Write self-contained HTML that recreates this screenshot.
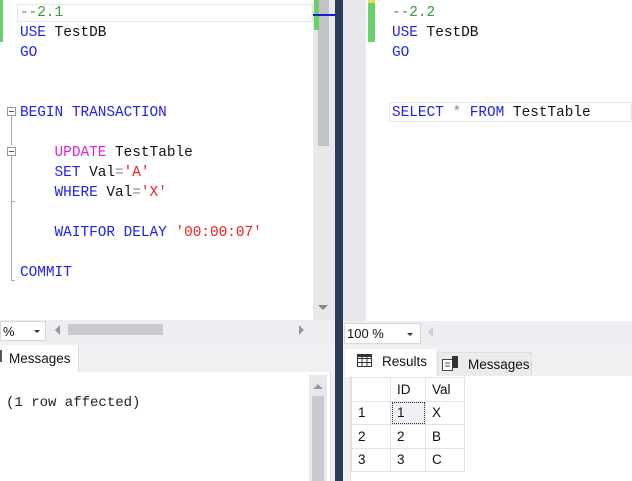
<!DOCTYPE html>
<html><head><style>
*{margin:0;padding:0;box-sizing:border-box}
body{width:632px;height:481px;overflow:hidden;background:#fff;position:relative;font-family:"Liberation Sans",sans-serif}
.a{position:absolute}
.code{font-family:"Liberation Mono",monospace;font-size:14.4px;line-height:20px;white-space:pre;color:#111}
.k{color:#2020f0}.p{color:#e020e0}.s{color:#f02020}.c{color:#3a9a3a}.g{color:#888}
.ui{font-size:13px;color:#111}
table{border-collapse:collapse;font-size:13.5px}
td{border:1px solid #e2e2e2;height:23.5px;padding:0 0 0 6px;color:#111}
</style></head><body>
<!-- left editor -->
<div class="a" style="left:0;top:0;width:313px;height:320px;background:#fff"></div>
<div class="a" style="left:0;top:0;width:3px;height:42px;background:#6ad06a"></div>
<div class="a" style="left:17px;top:4px;width:296px;height:18px;border:1px solid #e6e6e6"></div>
<div class="a code" style="left:20px;top:3px"><span class="c">--2.1</span>
<span class="k">USE</span> TestDB
<span class="k">GO</span>


<span class="k">BEGIN TRANSACTION</span>

    <span class="p">UPDATE</span> TestTable
    <span class="k">SET</span> Val<span class="g">=</span><span class="s">'A'</span>
    <span class="k">WHERE</span> Val<span class="g">=</span><span class="s">'X'</span>

    <span class="k">WAITFOR DELAY</span> <span class="s">'00:00:07'</span>

<span class="k">COMMIT</span></div>
<!-- fold markers -->
<div class="a" style="left:7px;top:107px;width:9px;height:9px;border:1px solid #999;background:#fff"></div>
<div class="a" style="left:9px;top:111px;width:5px;height:1px;background:#555"></div>
<div class="a" style="left:11px;top:116px;width:1px;height:29px;background:#aaa"></div>
<div class="a" style="left:7px;top:147px;width:9px;height:9px;border:1px solid #999;background:#fff"></div>
<div class="a" style="left:9px;top:151px;width:5px;height:1px;background:#555"></div>
<div class="a" style="left:11px;top:156px;width:1px;height:124px;background:#aaa"></div>
<div class="a" style="left:11px;top:201px;width:4px;height:1px;background:#aaa"></div>
<div class="a" style="left:11px;top:280px;width:4px;height:1px;background:#aaa"></div>
<!-- left vertical scrollbar -->
<div class="a" style="left:313px;top:0;width:22px;height:320px;background:#e8e8ec"></div>
<div class="a" style="left:318px;top:0;width:11px;height:146px;background:#c2c3c9"></div>
<div class="a" style="left:314px;top:0;width:5px;height:30px;background:#6ad06a"></div>
<div class="a" style="left:313px;top:14px;width:22px;height:2px;background:#1a1ad0"></div>
<div class="a" style="left:318px;top:305px;width:0;height:0;border-left:5px solid transparent;border-right:5px solid transparent;border-top:5px solid #888"></div>
<!-- left toolbar -->
<div class="a" style="left:0;top:320px;width:335px;height:22px;background:#eeeef2"></div>
<div class="a ui" style="left:0;top:321px;width:46px;height:20px;background:#fff;border:1px solid #cdd;padding:2px 2px">%</div>
<div class="a" style="left:34px;top:330px;border-left:3px solid transparent;border-right:3px solid transparent;border-top:3px solid #333"></div>
<div class="a" style="left:55px;top:325px;border-top:5px solid transparent;border-bottom:5px solid transparent;border-right:5px solid #999"></div>
<div class="a" style="left:68px;top:324px;width:95px;height:11px;background:#c9cacf"></div>
<div class="a" style="left:299px;top:325px;border-top:5px solid transparent;border-bottom:5px solid transparent;border-left:5px solid #999"></div>
<!-- left messages -->
<div class="a" style="left:0;top:342px;width:335px;height:139px;background:#f0f0f2"></div>
<div class="a ui" style="left:0;top:345px;width:79px;height:28px;background:#fff;border-right:1px solid #ddd;padding:6px 0 0 9px;font-size:13.5px">Messages</div>
<div class="a" style="left:0;top:350px;width:2px;height:12px;background:#555"></div>
<div class="a" style="left:0;top:372px;width:331px;height:109px;background:#fff;border-right:1px solid #ddd"></div>
<div class="a" style="left:6px;top:395px;font-family:'Liberation Mono',monospace;font-size:14px;color:#222">(1 row affected)</div>
<div class="a" style="left:309px;top:375px;width:18px;height:106px;background:#e8e8ec"></div>
<div class="a" style="left:313px;top:384px;border-left:5px solid transparent;border-right:5px solid transparent;border-bottom:5px solid #999"></div>
<div class="a" style="left:312px;top:396px;width:12px;height:85px;background:#c9cacf"></div>
<!-- splitter -->
<div class="a" style="left:335px;top:0;width:8px;height:481px;background:#2c3b58"></div>
<!-- right editor -->
<div class="a" style="left:343px;top:0;width:23px;height:321px;background:#e8e8ec"></div>
<div class="a" style="left:368px;top:0;width:7px;height:42px;background:#6ad06a"></div>
<div class="a" style="left:368px;top:0;width:7px;height:3px;background:#e8e050"></div>
<div class="a" style="left:389px;top:102px;width:243px;height:20px;border:1px solid #e6e6e6"></div>
<div class="a code" style="left:392px;top:3px"><span class="c">--2.2</span>
<span class="k">USE</span> TestDB
<span class="k">GO</span>


<span class="k">SELECT</span> <span class="g">*</span> <span class="k">FROM</span> TestTable</div>
<!-- right toolbar -->
<div class="a" style="left:343px;top:321px;width:289px;height:24px;background:#eeeef2"></div>
<div class="a ui" style="left:344px;top:323px;width:77px;height:21px;background:#fff;border:1px solid #cdd;padding:2px 2px">100 %</div>
<div class="a" style="left:407px;top:333px;border-left:3px solid transparent;border-right:3px solid transparent;border-top:3px solid #333"></div>
<div class="a" style="left:428px;top:327px;border-top:5px solid transparent;border-bottom:5px solid transparent;border-right:5px solid #ccc"></div>
<div class="a" style="left:343px;top:345px;width:289px;height:136px;background:#f0f0f2"></div>
<div class="a ui" style="left:345px;top:349px;width:91px;height:28px;background:#fff;padding:5px 0 0 37px;font-size:13.5px">Results</div>
<svg class="a" style="left:357px;top:354px" width="16" height="14"><rect x="0.5" y="0.5" width="14" height="12" fill="#fff" stroke="#333"/><path d="M0 4.5H15M0 8.5H15M5 0V13M10 0V13" stroke="#333"/><rect x="0" y="0" width="15" height="3" fill="#333"/></svg>
<div class="a ui" style="left:437px;top:352px;width:95px;height:25px;background:#ebebee;border:1px solid #ddd;padding:4px 0 0 30px;font-size:13.5px">Messages</div>
<svg class="a" style="left:442px;top:355px" width="18" height="17"><rect x="0.5" y="4.5" width="10" height="11" fill="#fff" stroke="#444"/><path d="M3 8h5M3 11h5" stroke="#444"/><rect x="10" y="1" width="6" height="12" fill="#333"/></svg>
<div class="a" style="left:350px;top:376px;width:282px;height:105px;background:#fff;border-left:1px solid #ddd"></div>
<table class="a" style="left:351px;top:377px">
<tr><td style="width:39px"></td><td style="width:35px">ID</td><td style="width:39px">Val</td></tr>
<tr><td>1</td><td style="outline:1px dotted #333;outline-offset:-2px;background:#eef0f6">1</td><td>X</td></tr>
<tr><td>2</td><td>2</td><td>B</td></tr>
<tr><td>3</td><td>3</td><td>C</td></tr>
</table>
</body></html>
